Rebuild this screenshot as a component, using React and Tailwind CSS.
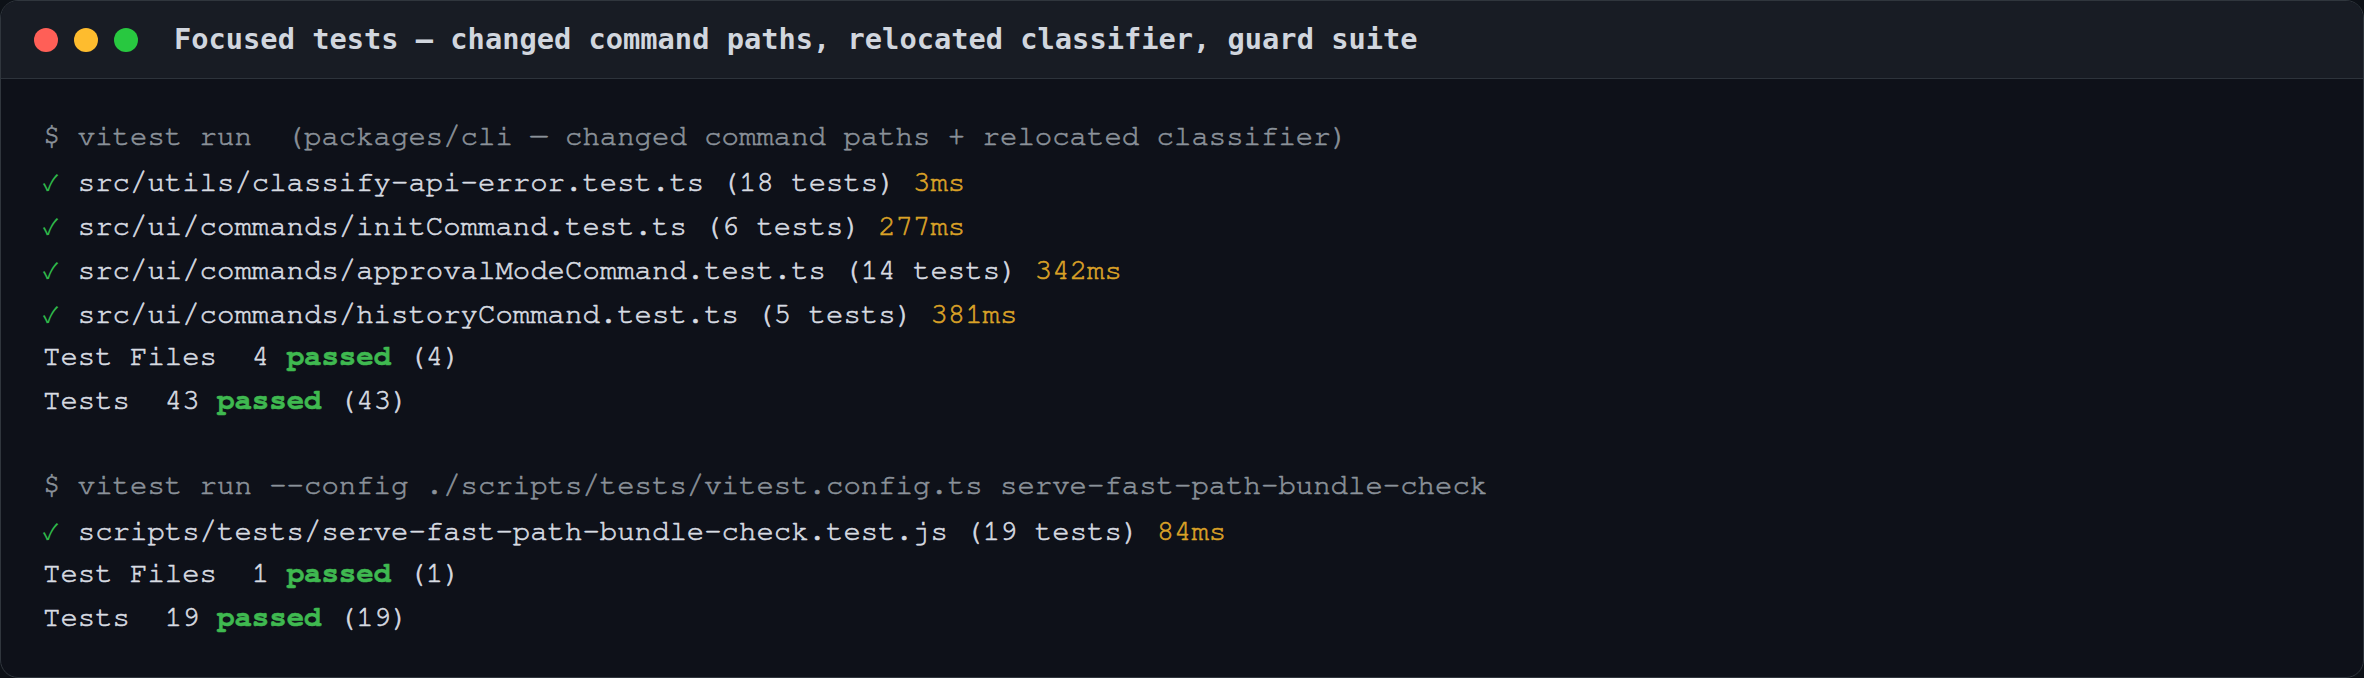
import React from 'react';

const runs = [
  {
    cmd: '$ vitest run  (packages/cli — changed command paths + relocated classifier)',
    results: [
      { file: 'src/utils/classify-api-error.test.ts', count: 18, time: '3ms' },
      { file: 'src/ui/commands/initCommand.test.ts', count: 6, time: '277ms' },
      { file: 'src/ui/commands/approvalModeCommand.test.ts', count: 14, time: '342ms' },
      { file: 'src/ui/commands/historyCommand.test.ts', count: 5, time: '381ms' },
    ],
    files: 4,
    tests: 43,
  },
  {
    cmd: '$ vitest run --config ./scripts/tests/vitest.config.ts serve-fast-path-bundle-check',
    results: [
      { file: 'scripts/tests/serve-fast-path-bundle-check.test.js', count: 19, time: '84ms' },
    ],
    files: 1,
    tests: 19,
  },
];

const Line = ({ children, className = '' }) => (
  <div className={`h-[44px] leading-[44px] ${className}`}>{children}</div>
);

const Summary = ({ label, n }) => (
  <Line>
    {label}  {n} <span className="font-bold text-[#3fb950]">passed</span> ({n})
  </Line>
);

export default function App() {
  return (
    <div className="w-[2364px] h-[678px] bg-[#0d1117]">
      <div className="h-full flex flex-col rounded-[18px] border border-[#30363d] overflow-hidden bg-[#0e1119]">
        {/* title bar */}
        <div className="h-[78px] shrink-0 flex items-center pl-[33px] bg-[#181c24] border-b border-[#2d333b]">
          <div className="flex gap-4">
            <span className="w-6 h-6 rounded-full bg-[#ff5f57]" />
            <span className="w-6 h-6 rounded-full bg-[#febc2e]" />
            <span className="w-6 h-6 rounded-full bg-[#28c840]" />
          </div>
          <div className="ml-9 text-[28.7px] font-bold text-[#d1d6de] font-[family-name:DejaVu_Sans_Mono,monospace] whitespace-pre">
            Focused tests — changed command paths, relocated classifier, guard suite
          </div>
        </div>

        {/* output */}
        <div className="flex-1 pt-[36px] pl-[42px] text-[29px] text-[#d8dce2] font-[family-name:Nimbus_Mono_PS,FreeMono,Courier_New,Courier,monospace] [-webkit-text-stroke:0.6px_currentColor] whitespace-pre">
          {runs.map((run, i) => (
            <div key={i} className={i > 0 ? 'mt-[41px]' : ''}>
              <Line className="text-[#8b929a]">{run.cmd}</Line>
              {run.results.map((r) => (
                <Line key={r.file}>
                  <span className="inline-block w-[17.4px] text-[22px] text-[#2fb84a] font-[family-name:Noto_Sans_CJK_SC,sans-serif] [-webkit-text-stroke:0px]">✓</span> {r.file} ({r.count} tests) <span className="text-[#dba227]">{r.time}</span>
                </Line>
              ))}
              <Summary label="Test Files" n={run.files} />
              <Summary label="Tests" n={run.tests} />
            </div>
          ))}
        </div>
      </div>
    </div>
  );
}
